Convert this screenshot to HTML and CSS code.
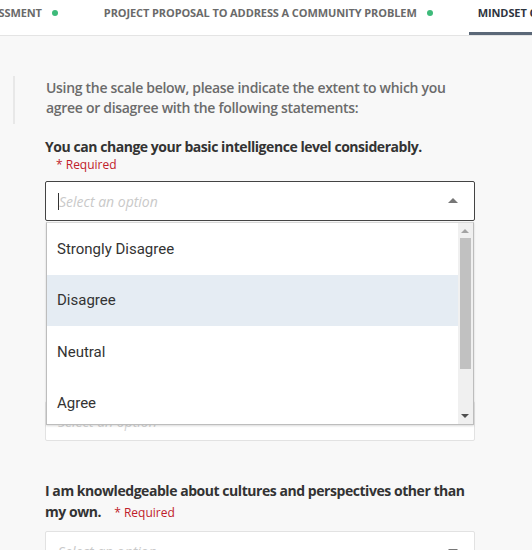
FILE: index.html
```html
<!DOCTYPE html>
<html>
<head>
<meta charset="utf-8">
<link rel="stylesheet" href="styles.css">
</head>
<body>
<nav class="tabs">
  <div class="tab first">ASSESSMENT <span class="dot"></span></div>
  <div class="tab">PROJECT PROPOSAL TO ADDRESS A COMMUNITY PROBLEM <span class="dot"></span></div>
  <div class="tab active">MINDSET QUESTIONNAIRE</div>
</nav>
<main class="content">
  <div class="intro">Using the scale below, please indicate the extent to which you agree or disagree with the following statements:</div>

  <div class="question">
    <div class="q-title">You can change your basic intelligence level considerably.</div>
    <div class="req indent">* Required</div>
    <div class="select-wrap">
      <div class="select focused">
        <span class="cursor"></span><span class="placeholder clip">Select an option</span>
        <span class="caret up"></span>
      </div>
      <div class="menu">
        <div class="options">
          <div class="opt">Strongly Disagree</div>
          <div class="opt hover">Disagree</div>
          <div class="opt">Neutral</div>
          <div class="opt">Agree</div>
        </div>
        <div class="scrollbar">
          <span class="sb-arrow sb-up"></span>
          <span class="sb-thumb"></span>
          <span class="sb-arrow sb-down"></span>
        </div>
      </div>
    </div>
    <div class="select second">
      <span class="placeholder">Select an option</span>
      <span class="caret down"></span>
    </div>
  </div>

  <div class="question q2">
    <div class="q-title">I am knowledgeable about cultures and perspectives other than my own. <span class="req">* Required</span></div>
    <div class="select">
      <span class="placeholder">Select an option</span>
      <span class="caret down"></span>
    </div>
  </div>
</main>
</body>
</html>
```
FILE: styles.css
```css
* { box-sizing: border-box; }
html, body { margin: 0; padding: 0; }
body {
  background: #f8f8f8;
  font-family: "Open Sans", "Liberation Sans", sans-serif;
  width: 532px;
  height: 550px;
  overflow: hidden;
}
.tabs {
  display: flex;
  height: 36px;
  background: #ffffff;
  border-bottom: 1px solid #e4e4e4;
  white-space: nowrap;
  overflow: hidden;
  font-family: "Open Sans", "Liberation Sans", sans-serif;
  font-size: 11px;
  font-weight: 700;
  color: #6a6a6a;
  letter-spacing: -0.1px;
}
.tab {
  display: flex;
  align-items: flex-start;
  padding-top: 5px;
  margin-right: 46px;
  flex: none;
  position: relative;
}
.tab.first { margin-left: -27px; }
.tab:nth-child(2) { margin-right: 36px; }
.dot {
  display: inline-block;
  width: 6px;
  height: 6px;
  border-radius: 50%;
  background: #3dba7a;
  margin-left: 10px;
  margin-top: 5px;
}
.tab.active {
  color: #2e3440;
  padding-left: 9px;
  border-bottom: 3px solid #5b6878;
  margin-right: 0;
}
.content {
  padding: 0 57px 0 45px;
}
.intro {
  margin: 40px 0 0 -32px;
  padding: 2px 0 7px 31px;
  border-left: 2px solid #e8e8e8;
  font-size: 14px;
  font-weight: 600;
  color: #6b6b6b;
  line-height: 19.5px;
  letter-spacing: -0.3px;
}
.question { margin-top: 12px; }
.q-title {
  font-size: 14px;
  font-weight: 700;
  color: #333;
  line-height: 21px;
  letter-spacing: -0.45px;
}
.req {
  font-size: 12px;
  font-weight: 400;
  color: #c0202a;
  line-height: 16px;
  letter-spacing: 0;
}
.q-title .req { margin-left: 10px; line-height: 1; }
.indent { padding-left: 11px; }
.select-wrap { position: relative; margin-top: 8px; }
.select {
  position: relative;
  display: flex;
  align-items: center;
  height: 40px;
  background: #fff;
  border: 1px solid #e2e2e2;
  border-radius: 2px;
  padding-left: 12px;
}
.select.focused { border-color: #444; }
.placeholder {
  font-size: 14px;
  font-style: italic;
  color: #c9c9c9;
  font-family: "Open Sans", sans-serif;
  white-space: nowrap;
}
.placeholder.clip {
  display: inline-block;
  width: 103px;
  overflow: hidden;
}
.cursor {
  width: 1px;
  height: 17px;
  background: #333;
  margin-right: 0;
}
.caret {
  position: absolute;
  right: 16px;
  top: 16px;
  width: 0;
  height: 0;
  border-left: 5px solid transparent;
  border-right: 5px solid transparent;
}
.caret.up { border-bottom: 5px solid #777; }
.caret.down { border-top: 5px solid #777; top: 17px; }
.select.second { margin-top: 180px; }
.select.second .placeholder { color: #d4d4d4; }
.menu {
  position: absolute;
  left: 1px;
  right: 1px;
  top: 41px;
  height: 203px;
  background: #fff;
  border: 1px solid #bdbdbd;
  border-top-color: #d8d8d8;
  box-shadow: 0 1px 2px rgba(0,0,0,0.15);
  display: flex;
  z-index: 5;
}
.options { flex: 1; }
.opt {
  height: 51.5px;
  display: flex;
  align-items: center;
  padding-left: 10px;
  font-family: "Roboto", "Open Sans", sans-serif;
  font-size: 15px;
  color: #333;
}
.opt.hover { background: #e5ecf3; }
.scrollbar {
  width: 15px;
  background: #f0f0f0;
  position: relative;
  flex: none;
}
.sb-thumb {
  position: absolute;
  left: 2px;
  right: 2px;
  top: 15px;
  height: 131px;
  background: #c1c1c1;
}
.sb-arrow {
  position: absolute;
  left: 3px;
  width: 0;
  height: 0;
  border-left: 4px solid transparent;
  border-right: 4px solid transparent;
}
.sb-up { top: 6px; border-bottom: 4px solid #a3a3a3; }
.sb-down { bottom: 6px; border-top: 4px solid #505050; }
.q2 { margin-top: 39px; }
.q2 .select { margin-top: 9px; }
```
